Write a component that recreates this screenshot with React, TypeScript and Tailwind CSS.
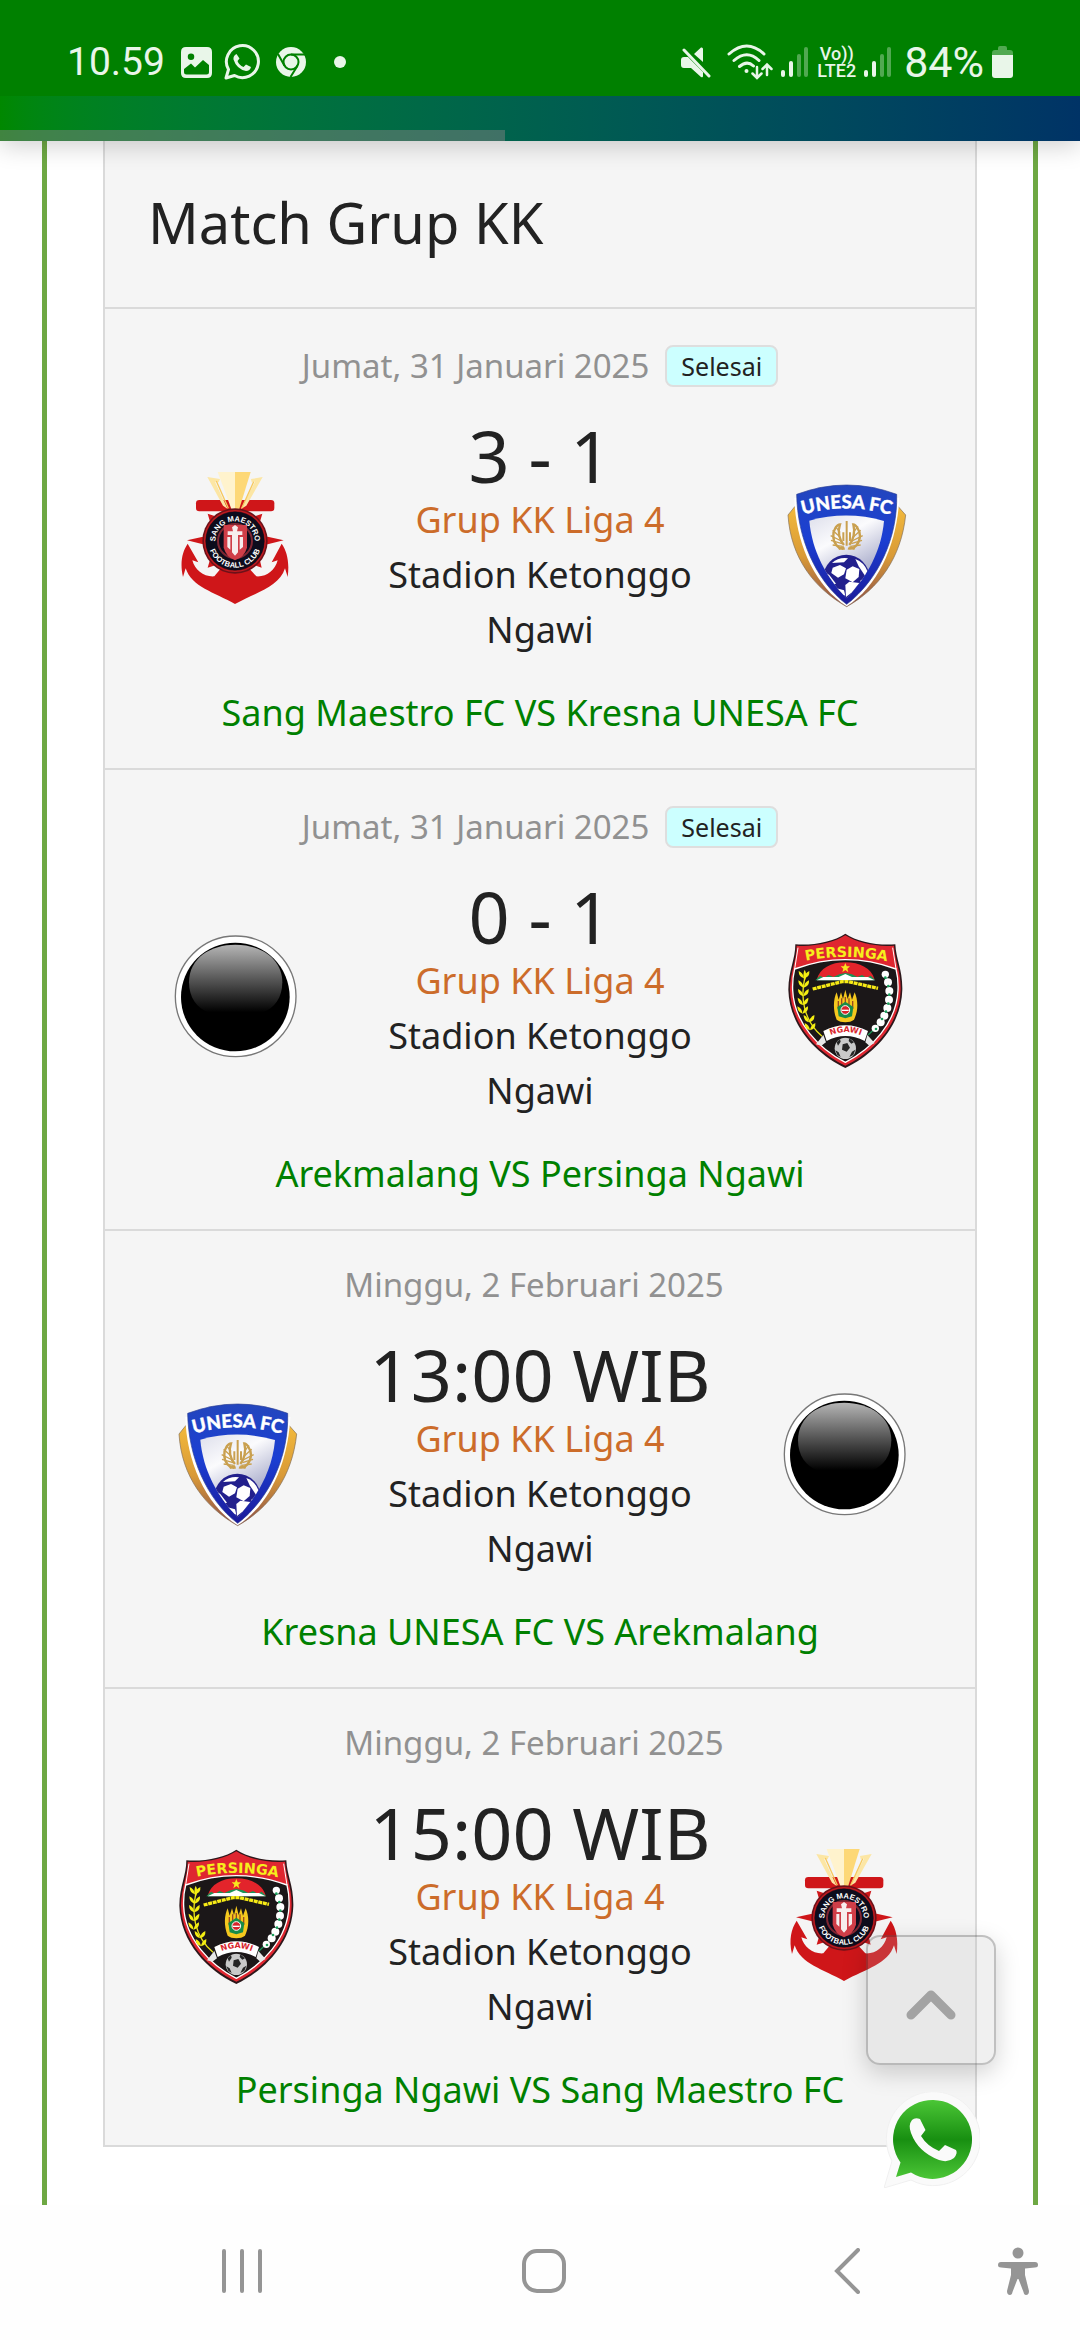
import { useId } from 'react'

type Team = 'maestro' | 'unesa' | 'arekmalang' | 'persinga'

interface Match {
  date: string
  finished: boolean
  result: string
  home: Team
  away: Team
}

const teamNames: Record<Team, string> = {
  maestro: 'Sang Maestro FC',
  unesa: 'Kresna UNESA FC',
  arekmalang: 'Arekmalang',
  persinga: 'Persinga Ngawi',
}

const matches: Match[] = [
  { date: 'Jumat, 31 Januari 2025', finished: true, result: '3 - 1', home: 'maestro', away: 'unesa' },
  { date: 'Jumat, 31 Januari 2025', finished: true, result: '0 - 1', home: 'arekmalang', away: 'persinga' },
  { date: 'Minggu, 2 Februari 2025', finished: false, result: '13:00 WIB', home: 'unesa', away: 'arekmalang' },
  { date: 'Minggu, 2 Februari 2025', finished: false, result: '15:00 WIB', home: 'persinga', away: 'maestro' },
]

/* ── Team crests ── */

function MaestroCrest() {
  const id = useId()
  return (
    <svg viewBox="0 36 450 450" className="size-[150px]" aria-hidden="true">
      <g fill="#cf1619">
        <rect x="105" y="147" width="235" height="34" rx="10" />
        <path d="M78 268 L150 252 V286 Z M368 268 L296 252 V286 Z" />
        <path d="M140 188 L170 198 L150 222 Z M304 188 L274 198 L294 222 Z M140 350 L150 316 L172 340 Z M302 350 L294 316 L272 340 Z" />
        <path d="M80 278 L112 334 L94 328 C102 358 128 378 160 376 L180 352 H264 L286 376 C318 378 342 358 350 328 L332 334 L362 278 C378 300 386 334 380 378 L372 352 C354 408 290 422 222 459 C160 424 92 408 74 352 L66 378 C56 334 64 302 80 278 Z" />
      </g>
      <path d="M170 63 H222 V176 H212 Z" fill="#fff3cd" />
      <path d="M222 63 H269 L234 176 H222 Z" fill="#fdd877" />
      <path d="M139 78 L177 84 L173 94 L162 92 L200 174 L186 164 Z" fill="#fce6a4" />
      <path d="M305 78 L270 84 L272 94 L282 92 L240 174 L256 164 Z" fill="#fce6a4" />
      <path d="M166 90 L202 172 M278 92 L242 172" stroke="#f7c95d" strokeWidth="4" />
      <circle cx="222" cy="270" r="98" fill="#6d1119" />
      <circle cx="222" cy="270" r="91" fill="none" stroke="#c11b20" strokeWidth="4" />
      <circle cx="222" cy="270" r="88" fill="#0d0c1c" />
      <circle cx="222" cy="270" r="51" fill="none" stroke="#7f2531" strokeWidth="6" />
      <path d="M188 222 H258 V290 Q250 318 222 328 Q196 318 188 290 Z" fill="#cf3e48" />
      <path d="M213 229 L222 222 L231 229 L228 241 H244 V252 H231 V304 L222 314 L213 304 V252 H200 V241 H216 Z M199 258 H208 V296 L199 288 Z M236 258 H246 V288 L236 296 Z" fill="#f6eeee" />
      <path id={id + 'top'} d="M163 270 A59 59 0 0 1 281 270" fill="none" />
      <path id={id + 'low'} d="M142 270 A80 80 0 0 0 302 270" fill="none" />
      <g fill="#fff" fontFamily="'Liberation Sans', sans-serif" fontWeight="700" fontSize="23" textAnchor="middle">
        <text>
          <textPath href={'#' + id + 'top'} startOffset="50%">SANG MAESTRO</textPath>
        </text>
        <text>
          <textPath href={'#' + id + 'low'} startOffset="50%">FOOTBALL CLUB</textPath>
        </text>
      </g>
    </svg>
  )
}

function UnesaCrest() {
  const id = useId()
  return (
    <svg viewBox="0 6 450 450" className="size-[150px]" aria-hidden="true">
      <defs>
        <linearGradient id={id + 'gold'} x1="0" y1="0" x2="0" y2="1">
          <stop offset="0" stopColor="#f2b93c" />
          <stop offset=".5" stopColor="#d99a37" />
          <stop offset="1" stopColor="#8c4f48" />
        </linearGradient>
        <linearGradient id={id + 'blue'} x1="0" y1="0" x2="0" y2="1">
          <stop offset="0" stopColor="#2346bd" />
          <stop offset=".45" stopColor="#1b3fd3" />
          <stop offset="1" stopColor="#1b1a9a" />
        </linearGradient>
        <linearGradient id={id + 'silver'} x1=".2" y1="0" x2=".7" y2="1">
          <stop offset="0" stopColor="#e4e5ef" />
          <stop offset=".3" stopColor="#fbfbfd" />
          <stop offset=".7" stopColor="#b4b7d2" />
          <stop offset="1" stopColor="#9ba0c6" />
        </linearGradient>
        <clipPath id={id + 'clip'}>
          <path d="M118 179 Q230 148 342 180 C334 270 292 346 230 412 C168 348 126 270 118 179 Z" />
        </clipPath>
      </defs>
      <path d="M75 136 L54 162 C62 290 132 382 230 437 C326 384 394 290 407 162 L384 136 Z" fill={'url(#' + id + 'gold)'} stroke="#826c55" strokeWidth="2" />
      <path d="M73 110 C76 240 130 372 230 436 C330 372 382 240 388 110 Z" fill="#fff" />
      <path d="M80 100 Q230 44 380 100 C384 230 324 358 230 430 C136 358 82 230 80 100 Z" fill={'url(#' + id + 'blue)'} stroke="#2a3e92" strokeWidth="2" />
      <path d="M118 179 Q230 148 342 180 C334 270 292 346 230 412 C168 348 126 270 118 179 Z" fill={'url(#' + id + 'silver)'} />
      <g fill="none" stroke="#c9a050" strokeWidth="7">
        <path d="M224 262 C206 268 190 246 190 226 C188 206 202 190 210 190 C202 212 208 238 222 252" />
        <path d="M234 262 C254 268 268 246 270 226 C270 206 256 190 250 190 C256 212 250 238 238 252" />
        <path d="M182 224 L214 240 M183 238 L216 248 M188 252 L218 256 M188 208 L210 228 M196 196 L210 214 M278 224 L246 240 M276 238 L244 248 M272 252 L242 256 M272 208 L250 228 M264 196 L250 214" strokeWidth="4" />
        <path d="M220 240 V214 M230 254 V180 M240 240 V214" strokeWidth="6" />
        <path d="M206 264 L222 258 M254 264 L238 258" />
      </g>
      <g clipPath={'url(#' + id + 'clip)'}>
        <circle cx="229" cy="350" r="69" fill="#22208d" />
        <g fill="#fff">
          <path d="M188 320 L184 336 L204 350 L222 340 L228 322 L210 312 Z" />
          <path d="M230 326 L248 316 L268 324 L266 348 L248 364 L226 352 Z" />
          <path d="M186 306 Q206 288 234 292 L222 304 Z" />
          <path d="M256 294 Q282 304 292 330 L286 346 L266 316 Z" />
          <path d="M168 336 L178 342 L198 368 L176 374 Z" />
          <path d="M226 372 L238 362 L268 366 L246 394 L228 408 Z" />
          <path d="M200 382 L222 388 L226 404 L214 400 Z" />
          <path d="M270 360 L290 346 L284 372 Z" />
        </g>
      </g>
      <path id={id + 'arc'} d="M94 162 Q230 122 366 163" fill="none" />
      <text fill="#fff" stroke="#fff" strokeWidth="1" fontFamily="Lato, sans-serif" fontWeight="900" fontSize="56" textAnchor="middle">
        <textPath href={'#' + id + 'arc'} startOffset="50%">UNESA FC</textPath>
      </text>
    </svg>
  )
}

function BallCrest() {
  const id = useId()
  return (
    <svg viewBox="0 9 450 450" className="size-[150px]" aria-hidden="true">
      <defs>
        <linearGradient id={id + 'gloss'} x1="0" y1="0" x2="0" y2="1">
          <stop offset="0" stopColor="#b5b5b5" />
          <stop offset=".5" stopColor="#595959" />
          <stop offset="1" stopColor="#000" />
        </linearGradient>
      </defs>
      <circle cx="224" cy="226" r="181" fill="#fff" stroke="#777" strokeWidth="4" />
      <circle cx="223" cy="228" r="163" fill="#000" />
      <path d="M84 184 C84 110 150 71 223 71 C298 71 364 112 364 184 C364 230 340 262 306 274 H142 C108 262 84 230 84 184 Z" fill={'url(#' + id + 'gloss)'} />
    </svg>
  )
}

function PersingaCrest() {
  const id = useId()
  return (
    <svg viewBox="0 13 450 450" className="size-[150px]" aria-hidden="true">
      <path d="M76 74 C130 78 190 66 226 42 C262 66 320 78 376 74 C378 120 398 150 397 210 C394 320 312 404 226 445 C140 404 58 320 55 210 C56 150 76 120 76 74 Z" fill="#2d171b" />
      <path d="M80 78 C132 82 190 70 226 47 C262 70 318 82 372 78 C374 124 393 152 392 210 C389 316 310 398 226 438 C142 398 63 316 60 210 C61 152 80 124 80 78 Z" fill="#df2630" />
      <path d="M74 148 Q226 92 378 148 C383 168 385 190 384 212 C380 310 304 388 226 428 C148 388 72 310 68 212 C67 190 69 168 74 148 Z" fill="#1b1718" stroke="#fff" strokeWidth="4" />
      <path d="M74 148 L84 84 M378 148 L368 84" stroke="#fff" strokeWidth="3" />
      <path d="M140 180 C150 146 182 128 226 128 C270 128 304 146 314 180 Z" fill="#e3242b" />
      <path d="M136 182 L150 168 L162 174 L176 166 L190 172 L208 164 L226 160 L246 164 L262 172 L276 166 L290 174 L302 168 L316 182 Z" fill="#1b9356" />
      <path d="M140 182 L160 172 H206 L226 163 L246 172 H294 L314 182 Z" fill="#fff" />
      <path d="M226 130 L230 140 L240 140 L232 147 L235 158 L226 151 L217 158 L220 147 L212 140 L222 140 Z" fill="#f8e71f" />
      <path d="M128 208 L216 186 H236 L324 206" fill="none" stroke="#f7ea16" strokeWidth="10" strokeDasharray="12 2" />
      <path d="M200 300 C188 270 190 238 200 218 L206 240 L213 218 L219 238 L226 210 L233 238 L240 218 L246 240 L254 218 C264 240 266 272 252 300 C240 310 212 310 200 300 Z" fill="#f5c81e" />
      <path d="M205 244 V268 M215 236 V262 M226 232 V258 M237 236 V262 M248 244 V268" stroke="#9a4a20" strokeWidth="4" />
      <path d="M226 246 L250 262 L246 290 L226 296 L206 290 L202 262 Z" fill="#188b48" />
      <circle cx="226" cy="271" r="13" fill="#d9252b" stroke="#fff" strokeWidth="3" />
      <path d="M216 272 H236" stroke="#fff" strokeWidth="4" />
      {/* rice ear on the left */}
      <path d="M104 176 C92 230 98 300 156 350" fill="none" stroke="#e9e419" strokeWidth="4" />
      <g fill="#f4ee12">
        {[160, 188, 214, 240, 266, 292, 316].map((y, i) => (
          <path key={y} d={`M${102 - i + (i > 4 ? i * 4 : 0)} ${y + 16} q-16 -4 -16 -22 q14 6 16 22 q2 -16 16 -22 q2 18 -16 22 Z`} />
        ))}
        <path d="M104 150 Q114 166 104 184 Q96 166 104 150 Z" />
      </g>
      {/* cotton branch on the right */}
      <path d="M348 164 C366 220 360 290 294 346" fill="none" stroke="#1b9356" strokeWidth="4" />
      <g fill="#fff">
        <circle cx="346" cy="164" r="11" />
        <circle cx="354" cy="188" r="12" />
        <circle cx="358" cy="214" r="12" />
        <circle cx="357" cy="240" r="12" />
        <circle cx="352" cy="265" r="12" />
        <circle cx="343" cy="288" r="12" />
        <circle cx="332" cy="308" r="12" />
        <circle cx="316" cy="326" r="11" />
      </g>
      <g fill="#1ba05c">
        <circle cx="346" cy="174" r="4" />
        <circle cx="355" cy="199" r="4" />
        <circle cx="358" cy="225" r="4" />
        <circle cx="355" cy="252" r="4" />
        <circle cx="348" cy="276" r="4" />
        <circle cx="336" cy="298" r="4" />
        <circle cx="318" cy="328" r="4" />
      </g>
      <path d="M160 346 L138 374 L154 378 L168 368 Z M292 346 L314 370 L298 378 L286 368 Z" fill="#e8e8e8" />
      <path d="M160 334 Q226 300 294 334 L284 364 Q226 334 170 364 Z" fill="#fff" />
      <circle cx="226" cy="386" r="32" fill="#c9c9c9" />
      <path d="M218 374 L232 370 L240 384 L230 396 L216 390 Z M200 368 L210 358 L212 366 L204 378 Z M238 356 L252 368 L244 372 L236 364 Z M196 392 L206 398 L212 412 L202 406 Z M246 396 L256 390 L250 406 L238 412 Z" fill="#252525" />
      <path id={id + 'name'} d="M84 129 Q226 94 374 130" fill="none" />
      <path id={id + 'city'} d="M172 351 Q226 324 282 351" fill="none" />
      <g fontFamily="'DejaVu Sans', sans-serif" fontWeight="700" textAnchor="middle">
        <text fill="#f6ee1c" fontSize="43">
          <textPath href={'#' + id + 'name'} startOffset="50%">PERSINGA</textPath>
        </text>
        <text fill="#d9252b" fontSize="24">
          <textPath href={'#' + id + 'city'} startOffset="50%">NGAWI</textPath>
        </text>
      </g>
    </svg>
  )
}

const crests: Record<Team, () => React.JSX.Element> = {
  maestro: MaestroCrest,
  unesa: UnesaCrest,
  arekmalang: BallCrest,
  persinga: PersingaCrest,
}

/* ── Phone status bar ── */

function SignalIcon() {
  return (
    <svg viewBox="0 0 28 32" className="h-8 w-7" fill="#e9f6e9" aria-hidden="true">
      <rect x="0" y="24" width="4" height="7" rx="2" />
      <rect x="8" y="15" width="4" height="16" rx="2" />
      <rect x="16" y="8" width="4" height="23" rx="2" opacity=".35" />
      <rect x="23" y="1" width="4" height="30" rx="2" opacity=".35" />
    </svg>
  )
}

function StatusBar() {
  return (
    <div className="flex h-24 items-center justify-between bg-[#008000] px-[67px] pt-7 font-[Roboto,sans-serif] text-[#e9f6e9]">
      <div className="flex items-center">
        <span className="text-[39px] leading-10">10.59</span>
        <svg viewBox="0 0 31 31" className="ml-4 size-[31px]" aria-hidden="true">
          <path fillRule="evenodd" fill="#e9f6e9" d="M5 0 H26 Q31 0 31 5 V26 Q31 31 26 31 H5 Q0 31 0 26 V5 Q0 0 5 0 Z M10 6.5 A3.2 3.2 0 1 0 10 13 A3.2 3.2 0 1 0 10 6.5 Z M3 22 L10 16.5 L14 20.500 L22 13 L28 18 V25 Q28 27.500 25.500 27.500 H5.500 Q3 27.500 3 25 Z" />
        </svg>
        <svg viewBox="0 0 36 36" className="ml-3 size-9" fill="none" aria-hidden="true">
          <path d="M2 34 L4.500 25.500 A16 16 0 1 1 10.500 31.500 Z" stroke="#e9f6e9" strokeWidth="3" strokeLinejoin="round" />
          <path d="M12.500 10 Q9 11.500 9.500 15.500 Q12.500 25 22 27 Q26 27 27 23 L22 20.500 L19.500 23 Q15 21 13.500 17 L15.500 14.500 Z" fill="#e9f6e9" />
        </svg>
        <svg viewBox="0 0 30 30" className="ml-4 size-[30px]" aria-hidden="true">
          <circle cx="15" cy="15" r="15" fill="#e9f6e9" />
          <circle cx="15" cy="15" r="7.500" fill="none" stroke="#008000" strokeWidth="2" />
          <path d="M15 7.500 H29 M8.500 18.700 L2 7 M21.500 18.700 L14.500 30" stroke="#008000" strokeWidth="2" />
        </svg>
        <span className="ml-7 size-3 rounded-full bg-[#e9f6e9]" />
      </div>
      <div className="flex items-center">
        <svg viewBox="0 0 30 31" className="h-[31px] w-[30px]" fill="#e9f6e9" aria-hidden="true">
          <path d="M3 10 H7 L22 25 V29 Q22 31 20 30 L10 21 H3 Q0 21 0 18 V13 Q0 10 3 10 Z M13 7 L20 0.500 Q22 0 22 2 V15 Z" />
          <path d="M3 3 L28 29" stroke="#e9f6e9" strokeWidth="3" strokeLinecap="round" />
        </svg>
        <svg viewBox="0 0 46 36" className="ml-4 h-9 w-[46px]" fill="none" stroke="#e9f6e9" strokeWidth="3" strokeLinecap="round" aria-hidden="true">
          <path d="M2 10 Q20 -6 37 10 M7 16.500 Q20 5 32 16.500 M12.500 22.500 Q20 16 26.500 22" />
          <circle cx="19.500" cy="27" r="2" fill="#e9f6e9" stroke="none" />
          <path d="M30 23 V33 M25.500 29.500 L30 34 L34.500 29.500 M40 31 V21 M35.500 25 L40 20.500 L44.500 25" strokeWidth="2.500" />
        </svg>
        <span className="ml-2 flex">
          <SignalIcon />
        </span>
        <span className="ml-2 flex flex-col items-center text-[18px] leading-[17px] font-medium">
          <span>Vo))</span>
          <span>LTE2</span>
        </span>
        <span className="ml-2 flex">
          <SignalIcon />
        </span>
        <span className="ml-3 text-[43px] leading-10">84%</span>
        <svg viewBox="0 0 21 32" className="ml-2 h-8 w-[21px]" fill="#e9f6e9" aria-hidden="true">
          <path d="M6 4 V2 Q6 0 8 0 H13 Q15 0 15 2 V4 H18 Q21 4 21 7 V9 H0 V7 Q0 4 3 4 Z" opacity=".35" />
          <path d="M0 9 H21 V29 Q21 32 18 32 H3 Q0 32 0 29 Z" />
        </svg>
      </div>
    </div>
  )
}

/* ── Match list ── */

function MatchRow({ match }: { match: Match }) {
  const Home = crests[match.home]
  const Away = crests[match.away]
  return (
    <li className="border-t-2 border-[#dadada] py-7 text-center text-[36px] leading-[55px]">
      <div className={match.finished ? 'flex h-[54px] items-end justify-center gap-4' : 'flex h-[51px] items-end justify-center pr-3'}>
        <time className="text-[33px] leading-[51px] text-[#919191]">{match.date}</time>
        {match.finished && (
          <span className="mb-1 rounded-lg border-2 border-[#dedede] bg-[#ccffff] px-3.5 text-[25px] leading-[38px]">Selesai</span>
        )}
      </div>
      <div className="mt-7 grid grid-cols-[3fr_4fr_3fr] items-center">
        <div className="flex justify-center">
          <Home />
        </div>
        <div>
          <p className="text-[72px] leading-[73px] whitespace-nowrap">{match.result}</p>
          <p className="text-[#cc6c2a]">Grup KK Liga 4</p>
          <p>Stadion Ketonggo Ngawi</p>
        </div>
        <div className="flex justify-center">
          <Away />
        </div>
      </div>
      <a href="#" className="mt-7 block text-[#008000]">
        {teamNames[match.home]} VS {teamNames[match.away]}
      </a>
    </li>
  )
}

/* ── Floating buttons ── */

function FloatingButtons() {
  const id = useId()
  return (
    <>
      <button
        aria-label="Kembali ke atas"
        className="fixed right-[84px] bottom-[275px] flex size-[130px] items-center justify-center rounded-[14px] border-2 border-black/20 bg-[#b4b4b4]/20 shadow-[0_8px_24px_rgba(0,0,0,0.18)]"
      >
        <svg viewBox="0 0 52 42" className="h-[42px] w-[52px]" fill="none" aria-hidden="true">
          <path d="M6 36 L26 16 L46 36" stroke="#a3a3a3" strokeWidth="9" strokeLinecap="round" strokeLinejoin="round" />
        </svg>
      </button>
      <a href="#" aria-label="WhatsApp" className="fixed right-[100px] bottom-[152px]">
        <svg viewBox="0 0 96 96" className="size-24" aria-hidden="true">
          <defs>
            <linearGradient id={id + 'wa'} x1="0" y1="0" x2="0" y2="1">
              <stop offset="0" stopColor="#4bc636" />
              <stop offset=".5" stopColor="#188f11" />
              <stop offset="1" stopColor="#4bc636" />
            </linearGradient>
          </defs>
          <path d="M0 96 L8 69 A47 47 0 1 1 27 88 Z" fill="#fafafa" stroke="#f0f0f0" />
          <path d="M12 85 L16.500 70.500 A39.500 39.500 0 1 1 27 80.500 Z" fill={'url(#' + id + 'wa)'} />
          <path d="M28 28 Q31 25 36 27 L41.500 38 L37 44 Q43 54 55 59 L61 53 L72 58 Q74 61 70 66 Q64 71 55 68 Q34 60 27 41 Q24 33 28 28 Z" fill="#fafafa" />
        </svg>
      </a>
    </>
  )
}

function NavBar() {
  return (
    <nav className="flex h-[135px] items-center bg-[#fefefe] pr-[42px] pb-[3px] pl-[91px] text-[#959595]">
      <button aria-label="Aplikasi terbaru" className="flex flex-1 justify-center">
        <svg viewBox="0 0 40 44" className="h-11 w-10" stroke="currentColor" strokeWidth="4" strokeLinecap="round" aria-hidden="true">
          <path d="M2 2 V42 M20 2 V42 M38 2 V42" />
        </svg>
      </button>
      <button aria-label="Beranda" className="flex flex-1 justify-center">
        <svg viewBox="0 0 44 44" className="size-11" fill="none" stroke="currentColor" strokeWidth="4" aria-hidden="true">
          <rect x="2" y="2" width="40" height="40" rx="13" />
        </svg>
      </button>
      <button aria-label="Kembali" className="flex flex-1 justify-center">
        <svg viewBox="0 0 26 46" className="h-[46px] w-[26px]" fill="none" stroke="currentColor" strokeWidth="4" strokeLinecap="round" aria-hidden="true">
          <path d="M24 2 L3 23 L24 44" />
        </svg>
      </button>
      <button aria-label="Aksesibilitas">
        <svg viewBox="0 0 40 48" className="h-12 w-10" fill="currentColor" aria-hidden="true">
          <circle cx="20" cy="6" r="5.500" />
          <path d="M3 15 H37 Q40 15 40 18 Q40 20.500 37 20.500 L27 21.500 V28 L31 44 Q31 48 28 48 Q26 48 25.500 45 L20.500 32 H19.500 L14.500 45 Q14 48 12 48 Q9 48 9 44 L13 28 V21.500 L3 20.500 Q0 20.500 0 18 Q0 15 3 15 Z" />
        </svg>
      </button>
    </nav>
  )
}

export default function App() {
  return (
    <div className="flex min-h-screen flex-col bg-white font-['Noto_Sans',sans-serif] text-[#222]">
      <header className="relative z-10 shadow-[0_4px_24px_rgba(0,0,0,0.2)]">
        <StatusBar />
        <div className="flex h-[45px] items-end bg-linear-to-r from-[#008800] to-[#003366]">
          <div className="h-[11px] w-[505px] bg-[#808080]/50" />
        </div>
      </header>

      <main className="mx-[42px] flex-1 border-x-[5px] border-[#6ea843] px-14">
        <section className="border-x-2 border-b-2 border-[#dadada] bg-[#f5f5f5]">
          <h2 className="px-[43px] pt-[43px] pb-[47px] text-[56px] leading-[76px]">Match Grup KK</h2>
          <ul>
            {matches.map((match, i) => (
              <MatchRow key={i} match={match} />
            ))}
          </ul>
        </section>
      </main>

      <FloatingButtons />
      <NavBar />
    </div>
  )
}
